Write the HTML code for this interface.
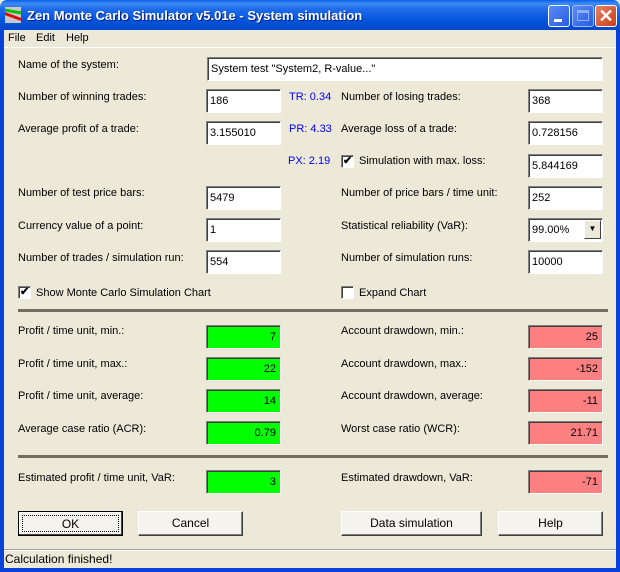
<!DOCTYPE html>
<html><head><style>
*{margin:0;padding:0;box-sizing:border-box}
body{width:620px;height:572px;overflow:hidden;font-family:"Liberation Sans",sans-serif;font-size:11px;color:#000;background:#ECE9D8;position:relative}
.t{position:absolute;white-space:nowrap;line-height:13px}
.b{position:absolute;background:#fff;border-top:1px solid #808080;border-left:1px solid #808080;border-right:1px solid #fff;border-bottom:1px solid #fff;box-shadow:inset 1px 1px 0 #404040;height:24px;padding:5px 0 0 3px;line-height:13px;white-space:nowrap}
.w{width:75px}
.g{background:#00FF00;text-align:right;padding-right:4px}
.r{background:#FF8080;text-align:right;padding-right:4px}
.blue{color:#0000FF}
.sep{position:absolute;left:18px;width:590px;height:3px;background:#716F64}
.cb{position:absolute;width:13px;height:13px;background:#fff;border:1px solid;border-color:#808080 #fff #fff #808080;box-shadow:inset 1px 1px 0 #404040}
.btn{position:absolute;height:25px;background:#F4F3EE;border:1px solid;border-color:#fff #404040 #404040 #fff;box-shadow:inset -1px -1px 0 #808080;text-align:center;line-height:22px;font-size:12px}
</style></head><body>
<div style="position:absolute;left:0;top:0;width:620px;height:30px;background:linear-gradient(#0A5FE6 0%,#3D8BF5 12%,#1E6CEA 30%,#0453DD 70%,#0348C6 100%);border-radius:7px 7px 0 0"></div>
<div style="position:absolute;left:5px;top:7px;width:16px;height:16px;background:#c8c8c8;overflow:hidden">
<div style="position:absolute;left:0;top:3px;width:16px;height:3px;background:#00c000;transform:skewY(10deg)"></div>
<div style="position:absolute;left:0;top:8px;width:16px;height:3px;background:#e00000;transform:skewY(20deg)"></div></div>
<div class="t" style="left:27px;top:8px;color:#fff;font-weight:bold;font-size:13px;line-height:16px;text-shadow:1px 1px 0 #0A1E80">Zen Monte Carlo Simulator v5.01e - System simulation</div>
<div style="position:absolute;left:548px;top:5px;width:22px;height:22px;border:1px solid #fff;border-radius:3px;background:linear-gradient(135deg,#5A8CF8,#2A5BE0)"><div style="position:absolute;left:5px;top:13px;width:8px;height:3px;background:#fff"></div></div>
<div style="position:absolute;left:572px;top:5px;width:22px;height:22px;border:1px solid #a0b8f0;border-radius:3px;background:linear-gradient(135deg,#5A8CF8,#2A5BE0)"><div style="position:absolute;left:4px;top:4px;width:12px;height:11px;border:1px solid #8fb0f0;border-top-width:3px"></div></div>
<div style="position:absolute;left:595px;top:5px;width:22px;height:22px;border:1px solid #fff;border-radius:3px;background:linear-gradient(135deg,#E88060,#C8401C);color:#fff;font-size:18px;font-weight:bold;text-align:center;line-height:20px">✕</div>
<div style="position:absolute;left:0;top:30px;width:4px;height:542px;background:#0842D8"></div>
<div style="position:absolute;right:0;top:30px;width:4px;height:542px;background:#0842D8"></div>
<div style="position:absolute;left:0;bottom:0;width:620px;height:4px;background:#0842D8"></div>
<div class="t" style="left:8px;top:32px">File</div>
<div class="t" style="left:36px;top:32px">Edit</div>
<div class="t" style="left:66px;top:32px">Help</div>
<div style="position:absolute;left:4px;top:47px;width:612px;height:1px;background:#fff"></div>

<div class="t" style="left:18px;top:59px">Name of the system:</div>
<div class="b" style="left:207px;top:57px;width:396px">System test "System2, R-value..."</div>

<div class="t" style="left:18px;top:91px">Number of winning trades:</div>
<div class="b w" style="left:206px;top:89px">186</div>
<div class="t blue" style="left:289px;top:91px">TR: 0.34</div>
<div class="t" style="left:341px;top:91px">Number of losing trades:</div>
<div class="b w" style="left:528px;top:89px">368</div>

<div class="t" style="left:18px;top:123px">Average profit of a trade:</div>
<div class="b w" style="left:206px;top:121px">3.155010</div>
<div class="t blue" style="left:289px;top:123px">PR: 4.33</div>
<div class="t" style="left:341px;top:123px">Average loss of a trade:</div>
<div class="b w" style="left:528px;top:121px">0.728156</div>

<div class="t blue" style="left:288px;top:155px">PX: 2.19</div>
<div class="cb" style="left:341px;top:155px"><span style="position:absolute;left:1px;top:-2px;font-size:11px;font-weight:bold">✔</span></div>
<div class="t" style="left:359px;top:155px">Simulation with max. loss:</div>
<div class="b w" style="left:528px;top:154px">5.844169</div>

<div class="t" style="left:18px;top:187px">Number of test price bars:</div>
<div class="b w" style="left:206px;top:186px">5479</div>
<div class="t" style="left:341px;top:187px">Number of price bars / time unit:</div>
<div class="b w" style="left:528px;top:186px">252</div>

<div class="t" style="left:18px;top:220px">Currency value of a point:</div>
<div class="b w" style="left:206px;top:218px">1</div>
<div class="t" style="left:341px;top:220px">Statistical reliability (VaR):</div>
<div class="b w" style="left:528px;top:218px">99.00%<div style="position:absolute;right:1px;top:1px;width:17px;height:19px;background:#ECE9D8;border:1px solid;border-color:#fff #404040 #404040 #fff;text-align:center;font-size:8px;line-height:16px">▼</div></div>

<div class="t" style="left:18px;top:252px">Number of trades / simulation run:</div>
<div class="b w" style="left:206px;top:250px">554</div>
<div class="t" style="left:341px;top:252px">Number of simulation runs:</div>
<div class="b w" style="left:528px;top:250px">10000</div>

<div class="cb" style="left:18px;top:286px"><span style="position:absolute;left:1px;top:-2px;font-size:11px;font-weight:bold">✔</span></div>
<div class="t" style="left:36px;top:287px">Show Monte Carlo Simulation Chart</div>
<div class="cb" style="left:341px;top:286px"></div>
<div class="t" style="left:359px;top:287px">Expand Chart</div>

<div class="sep" style="top:309px"></div>

<div class="t" style="left:18px;top:325px">Profit / time unit, min.:</div>
<div class="b w g" style="left:206px;top:325px">7</div>
<div class="t" style="left:341px;top:325px">Account drawdown, min.:</div>
<div class="b w r" style="left:528px;top:325px">25</div>

<div class="t" style="left:18px;top:358px">Profit / time unit, max.:</div>
<div class="b w g" style="left:206px;top:357px">22</div>
<div class="t" style="left:341px;top:358px">Account drawdown, max.:</div>
<div class="b w r" style="left:528px;top:357px">-152</div>

<div class="t" style="left:18px;top:390px">Profit / time unit, average:</div>
<div class="b w g" style="left:206px;top:389px">14</div>
<div class="t" style="left:341px;top:390px">Account drawdown, average:</div>
<div class="b w r" style="left:528px;top:389px">-11</div>

<div class="t" style="left:18px;top:423px">Average case ratio (ACR):</div>
<div class="b w g" style="left:206px;top:421px">0.79</div>
<div class="t" style="left:341px;top:423px">Worst case ratio (WCR):</div>
<div class="b w r" style="left:528px;top:421px">21.71</div>

<div class="sep" style="top:455px"></div>

<div class="t" style="left:18px;top:472px">Estimated profit / time unit, VaR:</div>
<div class="b w g" style="left:206px;top:470px">3</div>
<div class="t" style="left:341px;top:472px">Estimated drawdown, VaR:</div>
<div class="b w r" style="left:528px;top:470px">-71</div>

<div class="btn" style="left:18px;top:511px;width:105px;border:1px solid #000;box-shadow:inset -1px -1px 0 #404040,inset 1px 1px 0 #fff"><div style="position:absolute;left:3px;top:3px;right:3px;bottom:3px;border:1px dotted #000;line-height:16px">OK</div></div>
<div class="btn" style="left:138px;top:511px;width:105px">Cancel</div>
<div class="btn" style="left:341px;top:511px;width:141px">Data simulation</div>
<div class="btn" style="left:498px;top:511px;width:105px">Help</div>

<div style="position:absolute;left:4px;top:549px;width:612px;height:1px;background:#A0A0A0"></div>
<div style="position:absolute;left:4px;top:550px;width:612px;height:1px;background:#fff"></div>
<div class="t" style="left:5px;top:553px;font-size:12px">Calculation finished!</div>
</body></html>
